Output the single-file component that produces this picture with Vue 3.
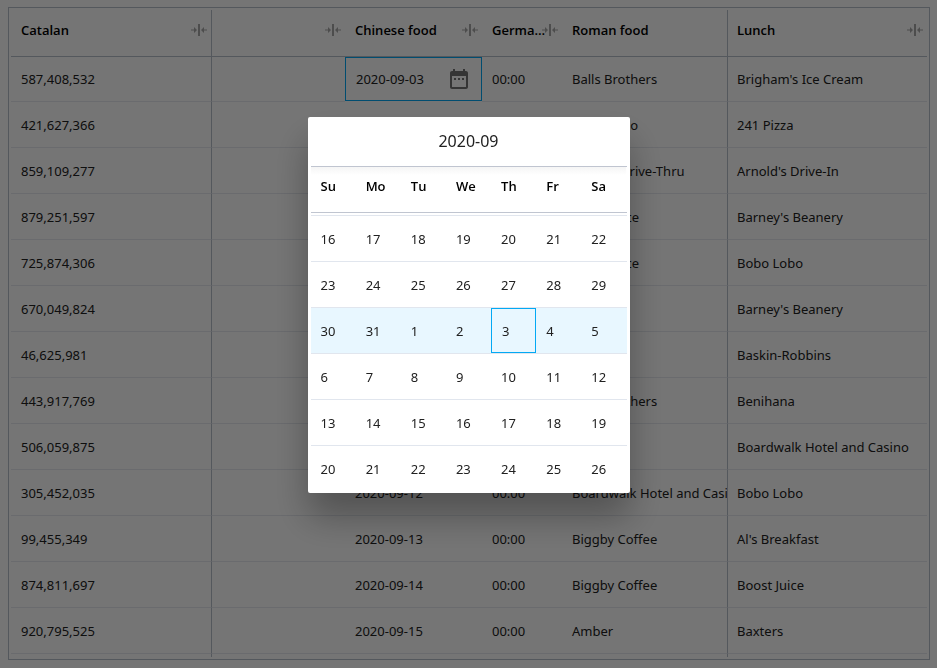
<script setup>
import { ref } from 'vue'

const columns = [
  { key: 'catalan', label: 'Catalan', resize: true },
  { key: 'blank', label: '', resize: true },
  { key: 'chinese', label: 'Chinese food', resize: true },
  { key: 'german', label: 'German food', resize: true },
  { key: 'roman', label: 'Roman food', resize: false },
  { key: 'lunch', label: 'Lunch', resize: true },
]

const source = [
  ['587,408,532', 'Balls Brothers', "Brigham's Ice Cream"],
  ['421,627,366', 'Bobo Lobo', '241 Pizza'],
  ['859,109,277', "Baker's Drive-Thru", "Arnold's Drive-In"],
  ['879,251,597', 'Boost Juice', "Barney's Beanery"],
  ['725,874,306', 'Boost Juice', 'Bobo Lobo'],
  ['670,049,824', 'Amber', "Barney's Beanery"],
  ['46,625,981', 'Amber', 'Baskin-Robbins'],
  ['443,917,769', 'Balls Brothers', 'Benihana'],
  ['506,059,875', 'Amber', 'Boardwalk Hotel and Casino'],
  ['305,452,035', 'Boardwalk Hotel and Casino', 'Bobo Lobo'],
  ['99,455,349', 'Biggby Coffee', "Al's Breakfast"],
  ['874,811,697', 'Biggby Coffee', 'Boost Juice'],
  ['920,795,525', 'Amber', 'Baxters'],
]

const rows = source.map(([catalan, roman, lunch], i) => ({
  catalan,
  blank: '',
  chinese: `2020-09-${String(i + 3).padStart(2, '0')}`,
  german: '00:00',
  roman,
  lunch,
}))

const date = ref('2020-09-03')
const weekdays = ['Su', 'Mo', 'Tu', 'We', 'Th', 'Fr', 'Sa']
const weeks = Array.from({ length: 6 }, (_, w) =>
  Array.from({ length: 7 }, (_, d) => {
    const day = new Date(Date.UTC(2020, 7, 16 + w * 7 + d))
    return { iso: day.toISOString().slice(0, 10), label: day.getUTCDate() }
  }),
)
const hasSelected = (week) => week.some((day) => day.iso === date.value)
</script>

<template>
  <div class="page">
    <main class="panel">
      <table class="grid">
        <colgroup>
          <col v-for="c in columns" :key="c.key" :class="'col-' + c.key" />
        </colgroup>
        <thead>
          <tr>
            <th v-for="c in columns" :key="c.key" scope="col" :class="'cell-' + c.key">
              <div class="head">
                <span class="label">{{ c.label }}</span>
                <svg v-if="c.resize" class="resize" viewBox="0 0 18 14" aria-hidden="true">
                  <path d="M1 7h5M12 7h5" />
                  <path class="tip" d="M4 4l3 3-3 3zM14 4l-3 3 3 3z" />
                  <path class="bar" d="M9 1v12" />
                </svg>
              </div>
            </th>
          </tr>
        </thead>
        <tbody>
          <tr v-for="(row, i) in rows" :key="row.catalan">
            <td
              v-for="c in columns"
              :key="c.key"
              :class="['cell-' + c.key, { editing: i === 0 && c.key === 'chinese' }]"
            >
              <div v-if="i === 0 && c.key === 'chinese'" class="editor">
                <input v-model="date" type="text" aria-label="Chinese food" />
                <button type="button" aria-label="Choose date">
                  <svg viewBox="0 0 24 24" aria-hidden="true">
                    <path d="M9 11H7v2h2v-2zm4 0h-2v2h2v-2zm4 0h-2v2h2v-2zm2-7h-1V2h-2v2H8V2H6v2H5c-1.11 0-1.99.9-1.99 2L3 20c0 1.1.89 2 2 2h14c1.1 0 2-.9 2-2V6c0-1.1-.9-2-2-2zm0 16H5V9h14v11z" />
                  </svg>
                </button>
              </div>
              <template v-else>{{ row[c.key] }}</template>
            </td>
          </tr>
        </tbody>
        <tfoot aria-hidden="true">
          <tr>
            <td v-for="c in columns" :key="c.key" :class="'cell-' + c.key"></td>
          </tr>
        </tfoot>
      </table>
    </main>

    <div class="overlay">
      <section class="picker" role="dialog" aria-labelledby="picker-title">
        <h2 id="picker-title">2020-09</h2>
        <table class="calendar">
          <thead>
            <tr>
              <th v-for="d in weekdays" :key="d" scope="col">{{ d }}</th>
            </tr>
          </thead>
          <tbody>
            <tr class="edge" aria-hidden="true">
              <td colspan="7"></td>
            </tr>
            <tr v-for="week in weeks" :key="week[0].iso" :class="{ current: hasSelected(week) }">
              <td v-for="day in week" :key="day.iso">
                <button
                  type="button"
                  :class="{ selected: day.iso === date }"
                  @click="date = day.iso"
                >{{ day.label }}</button>
              </td>
            </tr>
          </tbody>
        </table>
      </section>
    </div>
  </div>
</template>

<style>
body {
  background: #fff;
}
</style>

<style scoped>
.page {
  box-sizing: border-box;
  min-height: 100vh;
  padding: 7px 7px 8px 8px;
  font: 13px/20px "Noto Sans", "Open Sans", sans-serif;
  color: #212121;
}
.page *,
.page *::before,
.page *::after {
  box-sizing: border-box;
}
.panel {
  border: 1px solid #b8bfca;
  padding: 2px;
}
table {
  width: 100%;
  table-layout: fixed;
  border-collapse: separate;
  border-spacing: 0;
}
th,
td {
  padding: 0 0 0 10px;
  text-align: left;
  white-space: nowrap;
  overflow: hidden;
}
th {
  font-family: "Open Sans", "Noto Sans", sans-serif;
  font-weight: 600;
  color: #000;
}
.col-catalan {
  width: 201px;
}
.col-blank {
  width: 133px;
}
.col-chinese {
  width: 137px;
}
.col-german {
  width: 80px;
}
.col-lunch {
  width: 200px;
}
.grid th {
  height: 47px;
  padding-bottom: 6px;
  border-bottom: 1px solid #b8bfca;
}
.grid tbody td {
  height: 46px;
  border-bottom: 1px solid #e6e9ef;
}
.grid tbody tr:first-child td {
  height: 45px;
}
.grid tfoot td {
  height: 3px;
}
.grid .cell-catalan {
  border-right: 1px solid #b8bfca;
}
.grid .cell-lunch {
  border-left: 1px solid #b8bfca;
  padding-left: 9px;
}
.head {
  display: flex;
  align-items: center;
  padding-right: 3px;
}
.label {
  flex: 1;
  min-width: 0;
  overflow: hidden;
  text-overflow: ellipsis;
}
.cell-german .label {
  margin-right: -6px;
}
.resize {
  flex: none;
  width: 18px;
  height: 14px;
  fill: none;
  stroke: #a8a8a8;
  stroke-width: 1;
}
.resize .tip {
  fill: #a8a8a8;
  stroke: none;
}
.resize .bar {
  stroke-width: 2;
}
.grid tbody td.editing {
  padding: 0;
  border-bottom: 0;
  vertical-align: top;
}
.editor {
  display: flex;
  align-items: center;
  height: 44px;
  padding: 0 10px;
  border: 1px solid #03a9f4;
}
.editor input {
  flex: 1;
  min-width: 0;
  height: 20px;
  padding: 0;
  border: 0;
  outline: 0;
  background: none;
  font: inherit;
  color: inherit;
}
.editor button {
  display: flex;
  padding: 0;
  border: 0;
  background: none;
}
.editor svg {
  width: 24px;
  height: 24px;
  fill: #757575;
}
.overlay {
  position: fixed;
  inset: 0;
  display: flex;
  justify-content: center;
  align-items: flex-start;
  padding-top: 117px;
  background: rgba(0, 0, 0, 0.54);
}
.picker {
  width: 322px;
  max-width: 100%;
  padding: 0 3px 1px;
  border-radius: 2px;
  background: #fff;
  box-shadow: 0 24px 36px rgba(0, 0, 0, 0.3);
}
.picker h2 {
  margin: 0;
  height: 50px;
  border-bottom: 1px solid #c0c5d0;
  font-size: 16px;
  font-weight: 400;
  line-height: 49px;
  text-align: center;
}
.calendar th {
  height: 46px;
  padding-bottom: 7px;
  border-bottom: 1px solid #c0c5d0;
}
.calendar thead {
  background: linear-gradient(#f5f5f5, #fff 8px);
}
.calendar tbody td {
  height: 46px;
  padding: 0;
  border-bottom: 1px solid #e1e6ee;
}
.calendar tbody .edge td {
  height: 3px;
}
.calendar tbody tr:last-child td {
  border-bottom: 0;
}
.calendar button {
  display: block;
  width: 100%;
  height: 45px;
  padding: 0 0 0 10px;
  border: 0;
  background: none;
  font: inherit;
  color: inherit;
  text-align: left;
}
.calendar .current {
  background: #e8f7ff;
}
.calendar .selected {
  border: 1px solid #03a9f4;
}
</style>
